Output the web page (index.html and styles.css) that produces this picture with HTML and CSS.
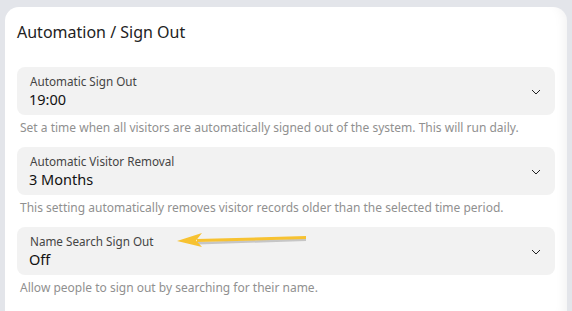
FILE: index.html
```html
<!DOCTYPE html>
<html>
<head>
<meta charset="utf-8">
<link rel="stylesheet" href="styles.css">
</head>
<body>
<div class="card">
  <h1 class="title">Automation / Sign Out</h1>
  <div class="group">
    <div class="select">
      <div class="texts">
        <div class="label">Automatic Sign Out</div>
        <div class="value">19:00</div>
      </div>
      <svg class="chev" width="10" height="6" viewBox="0 0 10 6"><path d="M1 1 L5 5 L9 1" fill="none" stroke="#222" stroke-width="1"/></svg>
    </div>
    <p class="help">Set a time when all visitors are automatically signed out of the system. This will run daily.</p>
  </div>
  <div class="group">
    <div class="select">
      <div class="texts">
        <div class="label">Automatic Visitor Removal</div>
        <div class="value">3 Months</div>
      </div>
      <svg class="chev" width="10" height="6" viewBox="0 0 10 6"><path d="M1 1 L5 5 L9 1" fill="none" stroke="#222" stroke-width="1"/></svg>
    </div>
    <p class="help">This setting automatically removes visitor records older than the selected time period.</p>
  </div>
  <div class="group">
    <div class="select">
      <div class="texts">
        <div class="label">Name Search Sign Out</div>
        <div class="value">Off</div>
      </div>
      <svg class="chev" width="10" height="6" viewBox="0 0 10 6"><path d="M1 1 L5 5 L9 1" fill="none" stroke="#222" stroke-width="1"/></svg>
    </div>
    <p class="help">Allow people to sign out by searching for their name.</p>
  </div>
  <svg class="arrow" width="140" height="20" viewBox="0 0 140 20">
    <path d="M22 11 L131 7.5 L131 10 L22 13.5 Z" fill="#9a9a9a" opacity="0.5" transform="translate(0,1)"/>
    <path d="M22 9 L131 6 L131 9 L22 12 Z" fill="#f7c231"/>
    <path d="M2 11 L27 3 L21 10.5 L27 17 Z" fill="#f7c231"/>
  </svg>
</div>
</body>
</html>
```
FILE: styles.css
```css
html, body {
  margin: 0;
  padding: 0;
}
body {
  background: #e3e5ea;
  font-family: "Noto Sans", "Open Sans", sans-serif;
  width: 572px;
  height: 311px;
  overflow: hidden;
}
.card {
  position: relative;
  margin: 7px 0 0 5px;
  width: 562px;
  height: 304px;
  background: #fff;
  border-radius: 14px 14px 0 0;
  box-shadow: inset -12px 0 12px -10px rgba(0,0,0,0.06);
  padding: 0 12px 0 12px;
  box-sizing: border-box;
  overflow: hidden;
}
.title {
  margin: 0;
  padding-top: 14px;
  font-size: 16px;
  font-weight: 400;
  color: #222;
  line-height: 22px;
  height: 46px;
}
.group {
  margin-bottom: 12px;
}
.select {
  width: 538px;
  height: 48px;
  background: #f2f2f2;
  border-radius: 8px;
  display: flex;
  align-items: center;
  justify-content: space-between;
  padding: 0 14px 0 12px;
  box-sizing: border-box;
}
.texts {
  display: flex;
  flex-direction: column;
}
.label {
  font-size: 11.7px;
  color: #444;
  line-height: 16px;
  padding-left: 1px;
}
.value {
  font-size: 14.5px;
  color: #111;
  line-height: 20px;
}
.chev {
  display: block;
  margin-top: 2px;
}
.help {
  margin: 6px 0 0 3px;
  font-size: 12px;
  color: #909090;
  line-height: 14px;
  white-space: nowrap;
}
.arrow {
  position: absolute;
  left: 170px;
  top: 223px;
}
```
